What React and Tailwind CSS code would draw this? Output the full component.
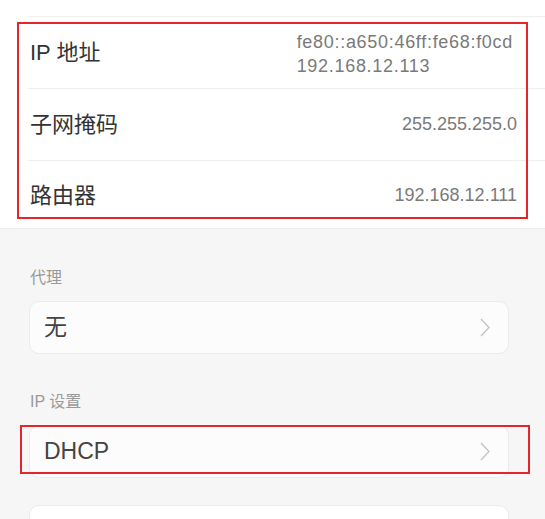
import React from "react";

const rows = [
  { label: "IP 地址", value: ["fe80::a650:46ff:fe68:f0cd", "192.168.12.113"] },
  { label: "子网掩码", value: ["255.255.255.0"] },
  { label: "路由器", value: ["192.168.12.111"] },
];

function Chevron() {
  return (
    <svg width="10" height="19" viewBox="0 0 10 19" fill="none">
      <path d="M1 1 L9 9.5 L1 18" stroke="#c2c2c2" strokeWidth="1.3" />
    </svg>
  );
}

function Card({ text, className = "" }) {
  return (
    <div
      className={`w-[480px] h-[53px] flex items-center justify-between pl-[14px] pr-[18px] bg-[#fcfcfc] border border-[#ebebeb] rounded-[10px] ${className}`}
    >
      <span className="text-[23px] leading-none text-[#444]">{text}</span>
      <Chevron />
    </div>
  );
}

export default function App() {
  return (
    <div className="relative w-[545px] h-[519px] overflow-hidden bg-[#f6f6f6] font-['Liberation_Sans','Noto_Sans_CJK_SC',sans-serif]">
      {/* info list */}
      <div className="h-[229px] bg-white pl-[28px] border-b border-[#ededed]">
        <div className="h-[17px] border-b border-[#eeeeee]" />
        {rows.map((row, i) => (
          <div
            key={row.label}
            className={`flex justify-between pl-[2px] pr-[28px] ${
              i < 2 ? "h-[72px] items-center border-b border-[#eeeeee]" : "h-[67px] items-start pt-[20px]"
            }`}
          >
            <span className="text-[22px] leading-[30px] text-[#333]">{row.label}</span>
            <div
              className={`text-[18px] text-[#7a7a7a] ${
                row.value.length > 1 ? "leading-[24px] tracking-[0.7px] mr-[4px] pt-[2px]" : "leading-[23px]"
              } ${i === 2 ? "pt-[3px]" : ""}`}
            >
              {row.value.map((v) => (
                <div key={v}>{v}</div>
              ))}
            </div>
          </div>
        ))}
      </div>

      {/* settings */}
      <div className="px-[29px] pt-[39px]">
        <div className="pl-[1px] text-[16px] leading-[20px] text-[#9a9a9a]">代理</div>
        <Card text="无" className="mt-[13px]" />
        <div className="mt-[38px] pl-[1px] text-[16px] leading-[20px] text-[#9a9a9a]">IP 设置</div>
        <Card text="DHCP" className="mt-[13px]" />
        <div className="mt-[27px] w-[480px] h-[53px] bg-white border border-[#ebebeb] rounded-[10px]" />
      </div>

      {/* annotation boxes */}
      <div className="absolute left-[17px] top-[22px] w-[511px] h-[197px] border-2 border-[#e5252a]" />
      <div className="absolute left-[20px] top-[425px] w-[510px] h-[49px] border-2 border-[#e5252a]" />
    </div>
  );
}
